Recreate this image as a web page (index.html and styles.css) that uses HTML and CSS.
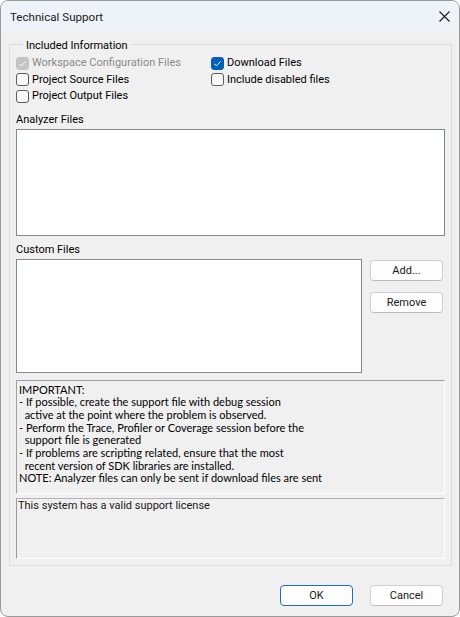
FILE: index.html
```html
<!DOCTYPE html>
<html>
<head>
<meta charset="utf-8">
<title>Technical Support</title>
<link rel="stylesheet" href="styles.css">
</head>
<body>
<div class="window">
  <div class="titlebar">
    <span class="title">Technical Support</span>
    <svg class="close" width="11" height="11" viewBox="0 0 11 11"><path d="M0.5 0.5 L10.5 10.5 M10.5 0.5 L0.5 10.5" stroke="#1b1b1b" stroke-width="1.1" fill="none"/></svg>
  </div>
  <div class="client">
    <fieldset class="group">
      <legend class="legend">Included Information</legend>
      <div class="checks">
        <label class="check disabled"><span class="box box-disabled"><svg width="13" height="13" viewBox="0 0 13 13"><path d="M3.3 6.8 L5.4 8.9 L9.7 4.4" stroke="#fff" stroke-width="1" fill="none"/></svg></span>Workspace Configuration Files</label>
        <label class="check"><span class="box box-checked"><svg width="13" height="13" viewBox="0 0 13 13"><path d="M3.3 6.8 L5.4 8.9 L9.7 4.4" stroke="#fff" stroke-width="1" fill="none"/></svg></span>Download Files</label>
        <label class="check"><span class="box"></span>Project Source Files</label>
        <label class="check"><span class="box"></span>Include disabled files</label>
        <label class="check"><span class="box"></span>Project Output Files</label>
      </div>
      <div class="label label-analyzer">Analyzer Files</div>
      <div class="listbox listbox-analyzer"></div>
      <div class="label label-custom">Custom Files</div>
      <div class="custom-row">
        <div class="listbox listbox-custom"></div>
        <div class="side-buttons">
          <button class="btn">Add...</button>
          <button class="btn">Remove</button>
        </div>
      </div>
      <div class="notes">IMPORTANT:
- If possible, create the support file with debug session
  active at the point where the problem is observed.
- Perform the Trace, Profiler or Coverage session before the
  support file is generated
- If problems are scripting related, ensure that the most
  recent version of SDK libraries are installed.
NOTE: Analyzer files can only be sent if download files are sent</div>
      <div class="license">This system has a valid support license</div>
    </fieldset>
    <div class="footer">
      <button class="btn btn-default">OK</button>
      <button class="btn">Cancel</button>
    </div>
  </div>
</div>
</body>
</html>
```
FILE: styles.css
```css
html, body {
  margin: 0;
  padding: 0;
  background: #ffffff;
}
body {
  font-family: Roboto, "Liberation Sans", sans-serif;
  font-size: 11px;
  color: #000;
}
.window {
  width: 460px;
  height: 617px;
  box-sizing: border-box;
  border: 1px solid #9a9a9a;
  border-radius: 8px;
  overflow: hidden;
  background: #f0f0f0;
  display: flex;
  flex-direction: column;
}
.titlebar {
  height: 30px;
  flex: none;
  background: #eef3f9;
  display: flex;
  align-items: center;
  justify-content: space-between;
  padding: 0 9px 0 9px;
}
.title {
  font-size: 11.6px;
  color: #1a1a1a;
  line-height: 16px;
  padding-top: 1px;
}
.close {
  display: block;
}
.client {
  flex: 1;
  padding: 6px 0 0 8px;
}
.group {
  width: 443px;
  box-sizing: border-box;
  margin: 0;
  padding: 3px 6px 6px 6px;
  border: 1px solid #dcdcdc;
  min-inline-size: 0;
}
.legend {
  margin-left: 7px;
  padding: 2px 3px 0 3px;
  line-height: 13px;
  font-size: 11px;
}
.checks {
  display: grid;
  grid-template-columns: 195px 1fr;
  grid-auto-rows: 16.5px;
}
.check {
  display: flex;
  align-items: center;
  gap: 3px;
  line-height: 16px;
  white-space: nowrap;
}
.check.disabled {
  color: #8a8a8a;
}
.box {
  width: 13px;
  height: 13px;
  box-sizing: border-box;
  border: 1px solid #5c5c5c;
  border-radius: 3px;
  background: #f9f9f9;
  flex: none;
}
.box svg {
  display: block;
  margin: -1px;
}
.box-checked {
  background: #005fb8;
  border-color: #005fb8;
}
.box-disabled {
  background: #c4c4c4;
  border-color: #c4c4c4;
}
.label {
  line-height: 16px;
}
.label-analyzer {
  margin-top: 7.5px;
}
.label-custom {
  margin-top: 6px;
}
.listbox {
  box-sizing: border-box;
  border: 1px solid #828790;
  background: #ffffff;
  margin-top: 1px;
}
.listbox-analyzer {
  width: 429px;
  height: 107px;
}
.custom-row {
  display: flex;
  gap: 8px;
  align-items: flex-start;
}
.listbox-custom {
  width: 346px;
  height: 114px;
}
.side-buttons {
  display: flex;
  flex-direction: column;
  gap: 11px;
  padding-top: 2px;
}
.btn {
  width: 73px;
  height: 21px;
  box-sizing: border-box;
  border: 1px solid #d0d0d0;
  border-bottom-color: #bdbdbd;
  border-radius: 4px;
  background: #fdfdfd;
  font-family: Roboto, "Liberation Sans", sans-serif;
  font-size: 11px;
  color: #1a1a1a;
  padding: 0;
  line-height: 19px;
}
.btn-default {
  border: 1px solid #1a6fc4;
}
.notes {
  margin-top: 7px;
  height: 114px;
  box-sizing: border-box;
  border: 1px solid;
  border-color: #a0a0a0 #ffffff #ffffff #a0a0a0;
  padding: 2.7px 2px 0 2px;
  font-family: Lato, "Liberation Sans", sans-serif;
  font-size: 11px;
  line-height: 12.67px;
  white-space: pre;
  color: #000;
}
.license {
  margin-top: 4px;
  height: 61px;
  box-sizing: border-box;
  border: 1px solid;
  border-color: #b4b4b4 #ffffff #ffffff #9a9a9a;
  padding: 0 1px;
  line-height: 14px;
  color: #1a1a1a;
}
.footer {
  display: flex;
  justify-content: flex-end;
  gap: 17px;
  margin-top: 19px;
  padding-right: 9px;
  width: 443px;
  box-sizing: border-box;
}
```
